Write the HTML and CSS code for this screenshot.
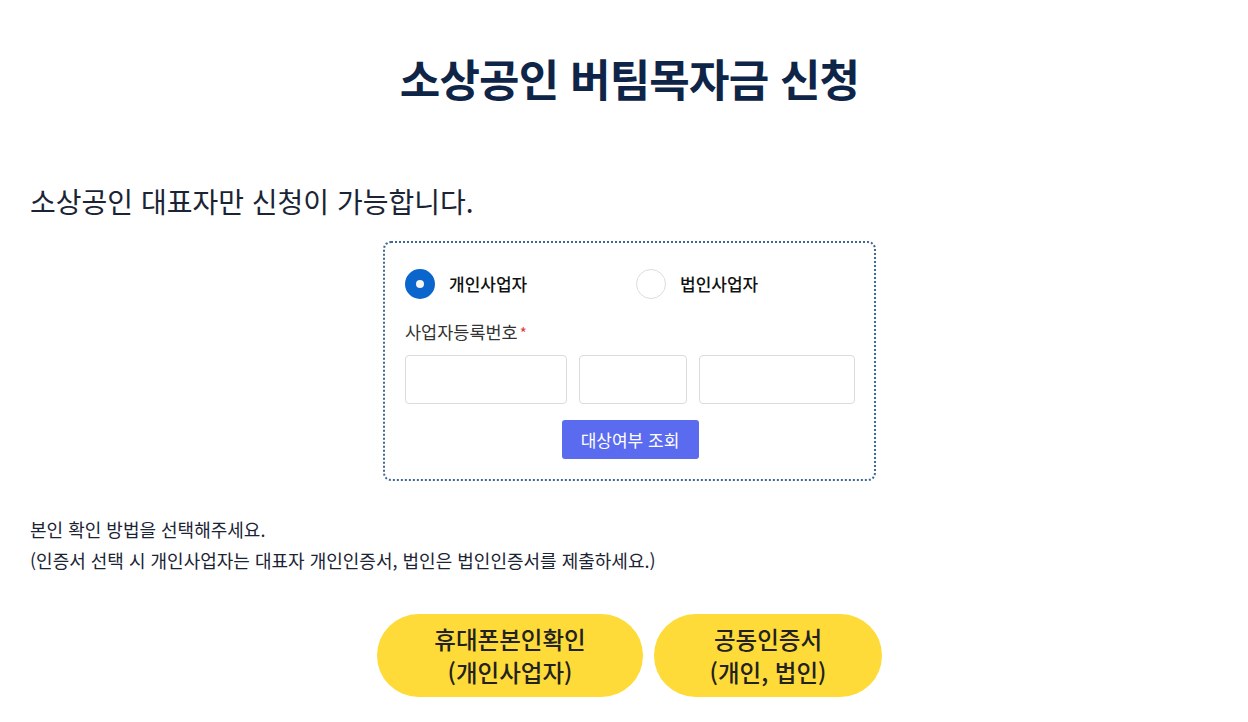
FILE: index.html
```html
<!DOCTYPE html>
<html lang="ko">
<head>
    <meta charset="UTF-8">
    <meta name="viewport" content="width=device-width, initial-scale=1.0">
    <title>소상공인 버팀목자금 신청</title>
    <link rel="stylesheet" href="styles.css">
</head>
<body>
    <div class="page">
        <h1 class="title">소상공인 버팀목자금 신청</h1>

        <p class="notice">소상공인 대표자만 신청이 가능합니다.</p>

        <div class="check-box">
            <div class="radio-row">
                <label class="radio-item">
                    <span class="radio checked"></span>
                    개인사업자
                </label>
                <label class="radio-item">
                    <span class="radio"></span>
                    법인사업자
                </label>
            </div>

            <div class="field-label">사업자등록번호<span class="req">*</span></div>
            <div class="biz-inputs">
                <input type="text" class="num1" maxlength="3">
                <input type="text" class="num2" maxlength="2">
                <input type="text" class="num3" maxlength="5">
            </div>

            <div class="btn-row">
                <button class="btn-check">대상여부 조회</button>
            </div>
        </div>

        <p class="guide">
            본인 확인 방법을 선택해주세요.<br>
            (인증서 선택 시 개인사업자는 대표자 개인인증서, 법인은 법인인증서를 제출하세요.)
        </p>

        <div class="auth-btns">
            <button class="btn-auth phone">휴대폰본인확인<br>(개인사업자)</button>
            <button class="btn-auth cert">공동인증서<br>(개인, 법인)</button>
        </div>
    </div>
</body>
</html>
```

FILE: styles.css
```css
body {
    margin: 0;
    font-family: "Noto Sans CJK KR", "Noto Sans", sans-serif;
    background-color: #fff;
    color: #222;
}
.page {
    padding: 0 19px 0 30px;
}
.title {
    margin: 48px 0 0;
    font-size: 44px;
    line-height: 60px;
    font-weight: 700;
    color: #0f2548;
    text-align: center;
    letter-spacing: -0.8px;
}
.notice {
    margin: 73px 0 0;
    font-size: 28px;
    line-height: 40px;
    font-weight: 400;
    color: #1b2434;
}
.check-box {
    width: 450px;
    margin: 20px auto 0;
    padding: 26px 19px 20px 20px;
    border: 2px dotted #3e6a92;
    border-radius: 8px;
}
.radio-row {
    display: grid;
    grid-template-columns: 231px auto;
}
.radio-item {
    display: flex;
    align-items: center;
    gap: 14px;
    height: 30px;
    font-size: 17px;
    line-height: 26px;
    font-weight: 500;
    color: #111;
}
.radio {
    width: 30px;
    height: 30px;
    box-sizing: border-box;
    border: 1px solid #ddd;
    border-radius: 50%;
    background: #fff;
}
.radio.checked {
    border: 11px solid #0a66cc;
    background: #f4f4f4;
}
.field-label {
    margin-top: 21px;
    font-size: 17.5px;
    line-height: 24px;
    color: #333;
}
.req {
    color: #e0393e;
    margin-left: 2px;
    font-size: 15px;
}
.biz-inputs {
    display: flex;
    gap: 12px;
    margin-top: 10px;
}
.biz-inputs input {
    height: 49px;
    box-sizing: border-box;
    border: 1px solid #dcdcdc;
    border-radius: 4px;
    padding: 0 10px;
    font-size: 16px;
}
.num1 { width: 162px; }
.num2 { width: 108px; }
.num3 { width: 156px; }
.btn-row {
    display: flex;
    justify-content: center;
    margin-top: 16px;
}
.btn-check {
    width: 137px;
    height: 39px;
    border: none;
    border-radius: 3px;
    background-color: #5b6bef;
    color: #fff;
    font-family: inherit;
    font-size: 17px;
    cursor: pointer;
}
.guide {
    margin: 33px 0 0;
    font-size: 18px;
    line-height: 31px;
    color: #1b2434;
}
.auth-btns {
    display: flex;
    justify-content: center;
    gap: 11px;
    margin-top: 38px;
}
.btn-auth {
    height: 83px;
    border: none;
    border-radius: 42px;
    background-color: #fedb38;
    color: #222;
    font-family: inherit;
    font-size: 23.5px;
    line-height: 33px;
    font-weight: 500;
    cursor: pointer;
}
.btn-auth.phone { width: 266px; }
.btn-auth.cert { width: 228px; }
```
